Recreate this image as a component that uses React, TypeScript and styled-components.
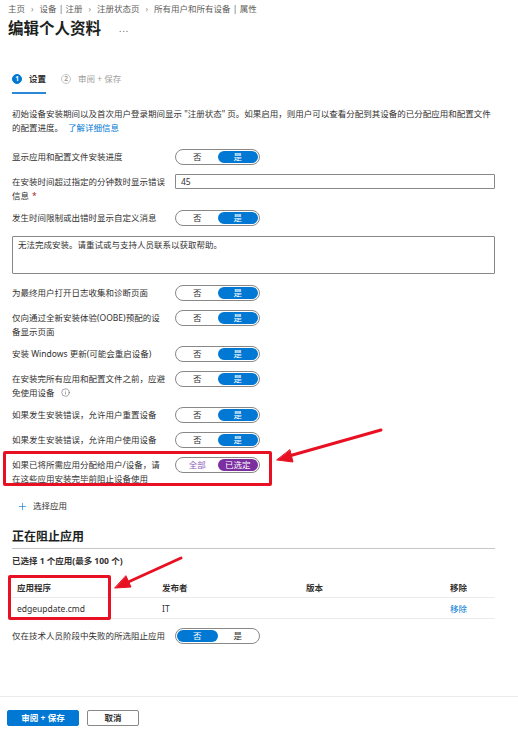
import styled, { createGlobalStyle } from 'styled-components';
import { Info, Plus } from 'lucide-react';

const GlobalStyle = createGlobalStyle`
  * { box-sizing: border-box; }
  html, body { margin: 0; padding: 0; background: #fff; }
  body {
    font-family: 'Noto Sans', 'Noto Sans CJK SC', sans-serif;
    font-size: 8.5px;
    color: #323130;
  }
`;

const Page = styled.div`
  position: relative;
  width: 518px;
  height: 732px;
  overflow: hidden;
  display: flex;
  flex-direction: column;
`;

const Header = styled.div`
  padding: 1px 8px 0;
`;

const Breadcrumb = styled.div`
  display: flex;
  align-items: center;
  gap: 6px;
  height: 14px;
  color: #605e5c;
`;

const Chevron = styled.span`
  font-size: 8px;
  color: #8a8886;
`;

const TitleRow = styled.div`
  display: flex;
  align-items: center;
  gap: 18px;
  margin-top: 3px;
`;

const Title = styled.h1`
  margin: 0;
  font-size: 15.5px;
  line-height: 20px;
  font-weight: 700;
  color: #201f1e;
`;

const More = styled.span`
  color: #605e5c;
  font-size: 9px;
  letter-spacing: 1px;
`;

const Content = styled.div`
  padding: 0 23px 0 12px;
`;

const Tabs = styled.div`
  display: flex;
  gap: 15px;
  margin-top: 33px;
`;

const Tab = styled.div<{ $active?: boolean }>`
  display: flex;
  align-items: center;
  gap: 7px;
  height: 23px;
  padding-bottom: 6px;
  border-bottom: 2px solid ${p => (p.$active ? '#2b88d8' : 'transparent')};
  color: ${p => (p.$active ? '#323130' : '#a19f9d')};
  font-weight: ${p => (p.$active ? 700 : 400)};
  line-height: 14px;
`;

const StepNo = styled.span<{ $active?: boolean }>`
  width: 10px;
  height: 10px;
  border-radius: 50%;
  display: flex;
  align-items: center;
  justify-content: center;
  font-size: 6.5px;
  font-weight: 700;
  background: ${p => (p.$active ? '#0078d4' : '#fff')};
  border: 1px solid ${p => (p.$active ? '#0078d4' : '#c8c6c4')};
  color: ${p => (p.$active ? '#fff' : '#a19f9d')};
`;

const Description = styled.p`
  margin: 13px 0 0;
  line-height: 14px;
`;

const Link = styled.a`
  color: #0078d4;
  text-decoration: none;
  margin-left: 5px;
`;

const Form = styled.div`
  display: flex;
  flex-direction: column;
  margin-top: 14px;
`;

const Row = styled.div`
  position: relative;
  display: grid;
  grid-template-columns: 155px 1fr;
  column-gap: 8px;
  align-items: start;
  padding-bottom: 7px;
`;

const Label = styled.div`
  padding-top: 1px;
  line-height: 14px;
`;

const Required = styled.span`
  color: #a4262c;
  margin-left: 3px;
`;

const InfoMark = styled.span`
  display: inline-flex;
  vertical-align: -1px;
  margin-left: 6px;
  color: #605e5c;
`;

const Control = styled.div`
  min-height: 18px;
`;

const Toggle = styled.div`
  width: 85px;
  height: 16px;
  border: 1px solid #8a8886;
  border-radius: 8px;
  padding: 1px;
  display: grid;
  grid-template-columns: 1fr 1fr;
`;

const ToggleOption = styled.span<{ $on?: boolean; $tone?: 'blue' | 'purple' }>`
  border-radius: 7px;
  display: flex;
  align-items: center;
  justify-content: center;
  line-height: 12px;
  background: ${p =>
    p.$on ? (p.$tone === 'purple' ? '#7b2ea0' : '#0078d4') : 'transparent'};
  color: ${p => (p.$on ? '#fff' : p.$tone === 'purple' ? '#8e5cb8' : '#323130')};
`;

const TextInput = styled.input`
  display: block;
  width: 100%;
  height: 15px;
  margin: 0;
  border: 1px solid #8a8886;
  border-radius: 1px;
  padding: 0 5px;
  font: inherit;
  color: #323130;
  outline: none;
`;

const MessageBox = styled.textarea`
  display: block;
  width: 100%;
  height: 38px;
  margin: 1px 0 11px;
  border: 1px solid #8a8886;
  border-radius: 1px;
  padding: 1px 5px;
  font: inherit;
  line-height: 14px;
  color: #323130;
  resize: none;
  outline: none;
`;

const Callout = styled.div`
  position: absolute;
  border: 3px solid #e81123;
  border-radius: 2px;
  pointer-events: none;
`;

const AddButton = styled.div`
  display: flex;
  align-items: center;
  gap: 5px;
  margin-top: 6px;
  padding-left: 5px;
  line-height: 14px;
  color: #323130;
`;

const SectionTitle = styled.h2`
  margin: 16px 0 0;
  padding-bottom: 3px;
  border-bottom: 1px solid #c8c6c4;
  font-size: 12px;
  line-height: 16px;
  font-weight: 700;
  color: #201f1e;
`;

const Count = styled.div`
  margin-top: 5px;
  line-height: 14px;
  font-weight: 700;
`;

const Table = styled.div`
  position: relative;
  margin-top: 8px;
`;

const TableRow = styled.div<{ $head?: boolean }>`
  display: grid;
  grid-template-columns: 145px 144px 144px 1fr;
  align-items: center;
  height: ${p => (p.$head ? '22px' : '21px')};
  border-bottom: 1px solid #edebe9;
  font-weight: ${p => (p.$head ? 700 : 400)};
`;

const Cell = styled.div<{ $link?: boolean }>`
  padding-left: 5px;
  color: ${p => (p.$link ? '#0078d4' : 'inherit')};
`;

const LastRow = styled(Row)`
  margin-top: 9px;
`;

const Footer = styled.div`
  margin-top: auto;
  border-top: 1px solid #edebe9;
  padding: 13px 7px 6px;
  display: flex;
  gap: 8px;
`;

const Button = styled.button<{ $primary?: boolean }>`
  height: 16px;
  width: ${p => (p.$primary ? '72px' : '52px')};
  padding: 0;
  border-radius: 2px;
  border: 1px solid ${p => (p.$primary ? '#0078d4' : '#8a8886')};
  background: ${p => (p.$primary ? '#0078d4' : '#fff')};
  color: ${p => (p.$primary ? '#fff' : '#323130')};
  font: inherit;
  font-weight: 700;
  line-height: 14px;
`;

const Arrows = styled.svg`
  position: absolute;
  left: 0;
  top: 0;
  pointer-events: none;
`;

type Choice = { left: string; right: string; on: 'left' | 'right'; tone?: 'blue' | 'purple' };

const Switch = ({ left, right, on, tone = 'blue' }: Choice) => (
  <Toggle>
    <ToggleOption $on={on === 'left'} $tone={tone}>{left}</ToggleOption>
    <ToggleOption $on={on === 'right'} $tone={tone}>{right}</ToggleOption>
  </Toggle>
);

const yesNo = { left: '否', right: '是', on: 'right' as const };

export default function App() {
  return (
    <Page>
      <GlobalStyle />
      <Header>
        <Breadcrumb>
          <span>主页</span>
          <Chevron>›</Chevron>
          <span>设备 | 注册</span>
          <Chevron>›</Chevron>
          <span>注册状态页</span>
          <Chevron>›</Chevron>
          <span>所有用户和所有设备 | 属性</span>
        </Breadcrumb>
        <TitleRow>
          <Title>编辑个人资料</Title>
          <More>...</More>
        </TitleRow>
      </Header>

      <Content>
        <Tabs>
          <Tab $active>
            <StepNo $active>1</StepNo>
            设置
          </Tab>
          <Tab>
            <StepNo>2</StepNo>
            审阅 + 保存
          </Tab>
        </Tabs>

        <Description>
          初始设备安装期间以及首次用户登录期间显示 "注册状态" 页。如果启用，则用户可以查看分配到其设备的已分配应用和配置文件
          <br />
          的配置进度。
          <Link href="#">了解详细信息</Link>
        </Description>

        <Form>
          <Row>
            <Label>显示应用和配置文件安装进度</Label>
            <Control><Switch {...yesNo} /></Control>
          </Row>
          <Row>
            <Label>
              在安装时间超过指定的分钟数时显示错误信息<Required>*</Required>
            </Label>
            <Control><TextInput defaultValue="45" /></Control>
          </Row>
          <Row>
            <Label>发生时间限制或出错时显示自定义消息</Label>
            <Control><Switch {...yesNo} /></Control>
          </Row>
          <MessageBox defaultValue="无法完成安装。请重试或与支持人员联系以获取帮助。" />
          <Row>
            <Label>为最终用户打开日志收集和诊断页面</Label>
            <Control><Switch {...yesNo} /></Control>
          </Row>
          <Row>
            <Label>仅向通过全新安装体验(OOBE)预配的设备显示页面</Label>
            <Control><Switch {...yesNo} /></Control>
          </Row>
          <Row>
            <Label>安装 Windows 更新(可能会重启设备)</Label>
            <Control><Switch {...yesNo} /></Control>
          </Row>
          <Row>
            <Label>
              在安装完所有应用和配置文件之前，应避免使用设备
              <InfoMark><Info size={9} strokeWidth={1.5} /></InfoMark>
            </Label>
            <Control><Switch {...yesNo} /></Control>
          </Row>
          <Row>
            <Label>如果发生安装错误，允许用户重置设备</Label>
            <Control><Switch {...yesNo} /></Control>
          </Row>
          <Row>
            <Label>如果发生安装错误，允许用户使用设备</Label>
            <Control><Switch {...yesNo} /></Control>
          </Row>
          <Row>
            <Label>如果已将所需应用分配给用户/设备，请在这些应用安装完毕前阻止设备使用</Label>
            <Control><Switch left="全部" right="已选定" on="right" tone="purple" /></Control>
            <Callout style={{ left: -9, top: -6, width: 269, height: 35 }} />
          </Row>
        </Form>

        <AddButton>
          <Plus size={11} strokeWidth={1.4} color="#0078d4" />
          选择应用
        </AddButton>

        <SectionTitle>正在阻止应用</SectionTitle>
        <Count>已选择 1 个应用(最多 100 个)</Count>

        <Table>
          <TableRow $head>
            <Cell>应用程序</Cell>
            <Cell>发布者</Cell>
            <Cell>版本</Cell>
            <Cell>移除</Cell>
          </TableRow>
          <TableRow>
            <Cell>edgeupdate.cmd</Cell>
            <Cell>IT</Cell>
            <Cell></Cell>
            <Cell $link>移除</Cell>
          </TableRow>
          <Callout style={{ left: -4, top: -1, width: 103, height: 45 }} />
        </Table>

        <LastRow>
          <Label>仅在技术人员阶段中失败的所选阻止应用</Label>
          <Control><Switch left="否" right="是" on="left" /></Control>
        </LastRow>
      </Content>

      <Footer>
        <Button $primary>审阅 + 保存</Button>
        <Button>取消</Button>
      </Footer>

      <Arrows width={518} height={732} viewBox="0 0 518 732">
        <g stroke="#e81123" strokeWidth={3} strokeLinecap="round" fill="#e81123">
          <line x1={381} y1={430} x2={289} y2={456} />
          <polygon points="277,460 293,462 290,450" strokeWidth={1} strokeLinejoin="round" />
          <line x1={181} y1={558} x2={126} y2={583} />
          <polygon points="115,588 131,587 126,576" strokeWidth={1} strokeLinejoin="round" />
        </g>
      </Arrows>
    </Page>
  );
}
